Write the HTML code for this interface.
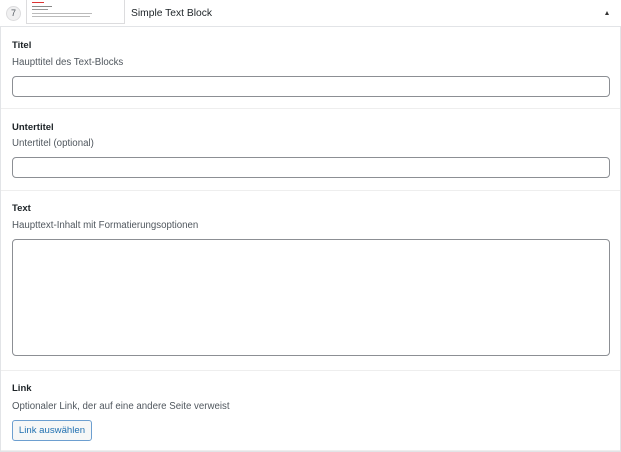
<!DOCTYPE html>
<html><head><meta charset="utf-8"><style>
*{box-sizing:border-box;margin:0;padding:0}
body{width:621px;height:452px;background:#fff;font-family:"Liberation Sans",sans-serif;position:relative;overflow:hidden;color:#1d2327}
.wrap{position:absolute;left:0;top:0;width:621px;height:452px;border:1px solid #e2e4e7;border-top:none}
.hdr{position:absolute;left:0;top:0;width:621px;height:27px;background:#fff;border-bottom:1px solid #e2e4e7}
.num{position:absolute;left:6px;top:6px;width:15px;height:15px;border-radius:50%;background:#f0f0f1;border:1px solid #dcdcde;font-size:9px;line-height:13px;text-align:center;color:#50575e}
.thumb{position:absolute;left:26px;top:0;width:99px;height:24px;border:1px solid #dcdcde;border-top:none;background:#fff}
.ttl{position:absolute;left:131px;top:8px;font-size:10.3px;color:#1d2327}
.arr{position:absolute;left:605px;top:11px;width:0;height:0;border-left:2.5px solid transparent;border-right:2.5px solid transparent;border-bottom:4px solid #333}
.lab{position:absolute;left:12px;font-size:9.5px;font-weight:bold;color:#1d2327}
.desc{position:absolute;left:12px;font-size:9.7px;color:#50575e}
.inp{position:absolute;left:12px;width:598px;border:1px solid #8c8f94;border-radius:4px;background:#fff}
.div{position:absolute;left:1px;width:619px;height:1px;background:#eeeeee}
.btn{position:absolute;left:12px;top:420px;width:80px;height:21px;border:1px solid #6d9fd0;border-radius:3px;background:#f6f7f7;color:#2271b1;font-size:9.6px;line-height:19px;text-align:center}
.l{position:absolute;height:1px;background:#c8c8c8}
</style></head><body>
<div class="wrap"></div>
<div class="hdr">
 <div class="num">7</div>
 <div class="thumb">
  <div class="l" style="left:5px;top:2px;width:12px;background:#d33"></div>
  <div class="l" style="left:5px;top:6px;width:20px;background:#888"></div>
  <div class="l" style="left:5px;top:9px;width:16px;background:#999"></div>
  <div class="l" style="left:5px;top:13px;width:60px;background:#bbb"></div>
  <div class="l" style="left:5px;top:16px;width:58px;background:#bbb"></div>
 </div>
 <div class="ttl">Simple Text Block</div>
 <div class="arr"></div>
</div>
<div class="lab" style="top:40px">Titel</div>
<div class="desc" style="top:57px">Haupttitel des Text-Blocks</div>
<div class="inp" style="top:76px;height:21px"></div>
<div class="div" style="top:108px"></div>
<div class="lab" style="top:122px">Untertitel</div>
<div class="desc" style="top:138px">Untertitel (optional)</div>
<div class="inp" style="top:157px;height:21px"></div>
<div class="div" style="top:190px"></div>
<div class="lab" style="top:203px">Text</div>
<div class="desc" style="top:220px">Haupttext-Inhalt mit Formatierungsoptionen</div>
<div class="inp" style="top:239px;height:117px"></div>
<div class="div" style="top:370px"></div>
<div class="lab" style="top:383px">Link</div>
<div class="desc" style="top:401px">Optionaler Link, der auf eine andere Seite verweist</div>
<div class="btn">Link auswählen</div>
<div class="div" style="top:450px"></div>
</body></html>
